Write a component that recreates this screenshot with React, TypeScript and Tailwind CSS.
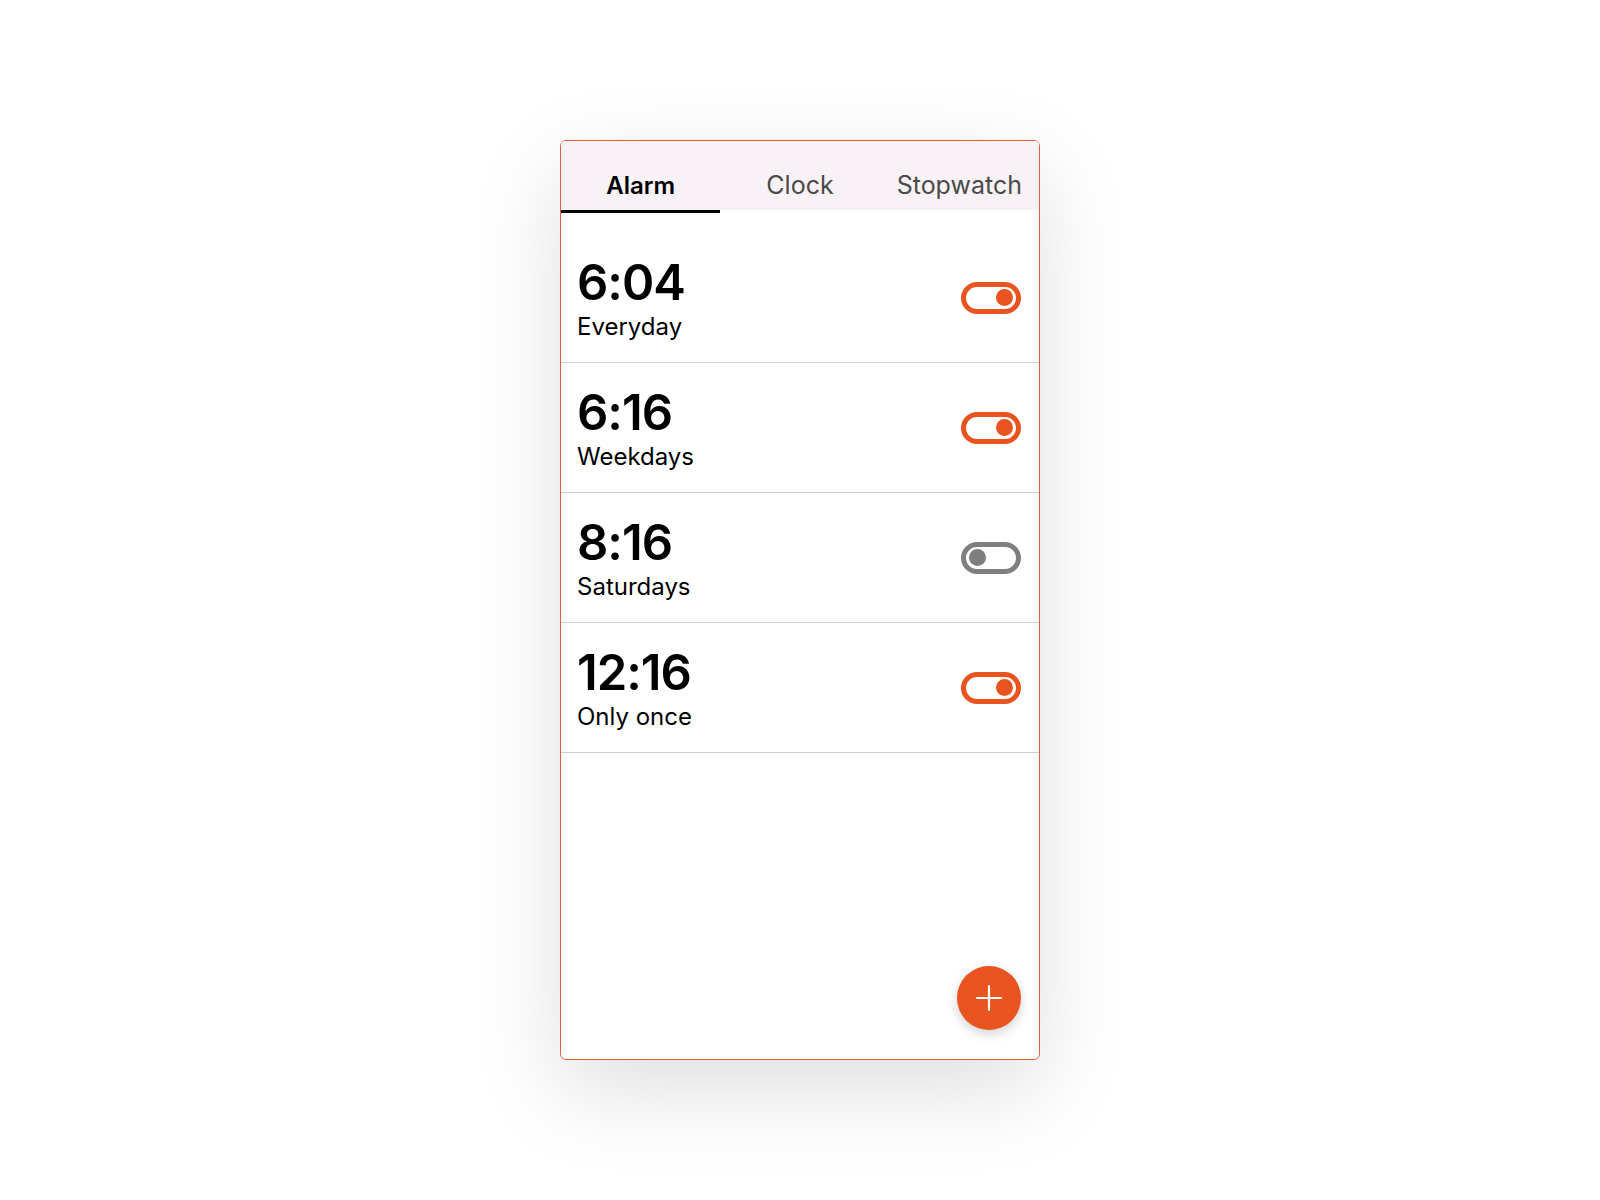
import React from "react";

type Alarm = { time: string; label: string; on: boolean };

const ALARMS: Alarm[] = [
  { time: "6:04", label: "Everyday", on: true },
  { time: "6:16", label: "Weekdays", on: true },
  { time: "8:16", label: "Saturdays", on: false },
  { time: "12:16", label: "Only once", on: true },
];

function Toggle({ on, onClick }: { on: boolean; onClick: () => void }) {
  return (
    <button
      onClick={onClick}
      className={
        on
          ? "flex h-[32px] w-[60px] items-center justify-end rounded-full border-[5px] border-[#e8531f] bg-white px-[3px]"
          : "flex h-[32px] w-[60px] items-center justify-start rounded-full border-[5px] border-[#7f7f7f] bg-white px-[3px]"
      }
    >
      <span
        className={
          on
            ? "block h-[17px] w-[17px] rounded-full bg-[#e8531f]"
            : "block h-[17px] w-[17px] rounded-full bg-[#7f7f7f]"
        }
      />
    </button>
  );
}

export default function App() {
  const [tab, setTab] = React.useState("Alarm");
  const [alarms, setAlarms] = React.useState(ALARMS);

  function flip(i: number) {
    setAlarms(alarms.map((a, j) => (j === i ? { ...a, on: !a.on } : a)));
  }

  return (
    <div
      className="flex h-[1200px] w-full items-center justify-center bg-white"
      style={{ fontFamily: "Inter, 'Noto Sans', sans-serif" }}
    >
      <div className="flex h-[920px] w-[480px] flex-col overflow-hidden rounded-md border border-[#e0603d] bg-white shadow-[0_30px_90px_rgba(0,0,0,0.13)]">
        <div className="grid grid-cols-3 bg-white">
          {["Alarm", "Clock", "Stopwatch"].map((t) => (
            <button
              key={t}
              onClick={() => setTab(t)}
              className={
                tab === t
                  ? "h-[72px] border-b-[3px] border-black bg-[#f8f1f5] bg-clip-padding pt-[20px] text-[24px] font-semibold text-black"
                  : "h-[72px] border-b-[3px] border-transparent bg-[#f8f1f5] bg-clip-padding pt-[20px] text-[25px] font-normal text-[#4a4a4a]"
              }
            >
              {t}
            </button>
          ))}
        </div>
        <div className="flex flex-col pt-[20px]">
          {alarms.map((a, i) => (
            <div
              key={a.time}
              className="flex h-[130px] items-center justify-between border-b border-[#cfcfcf] pl-[16px] pr-[18px]"
            >
              <div className="mt-[4px] flex flex-col">
                <span className="text-[49px] leading-none font-semibold tracking-[-1px] text-black">
                  {a.time}
                </span>
                <span className="mt-[5px] text-[24px] leading-[30px] text-black">
                  {a.label}
                </span>
              </div>
              <Toggle on={a.on} onClick={() => flip(i)} />
            </div>
          ))}
        </div>
        <div className="flex flex-1 items-end justify-end pb-[29px] pr-[18px]">
          <button className="flex h-[64px] w-[64px] items-center justify-center rounded-full bg-[#e8531f] shadow-[0_4px_12px_rgba(0,0,0,0.18)]">
            <svg width="28" height="28" viewBox="0 0 28 28" fill="none">
              <path
                d="M14 2V26M2 14H26"
                stroke="white"
                strokeWidth="2.2"
                strokeLinecap="round"
              />
            </svg>
          </button>
        </div>
      </div>
    </div>
  );
}
